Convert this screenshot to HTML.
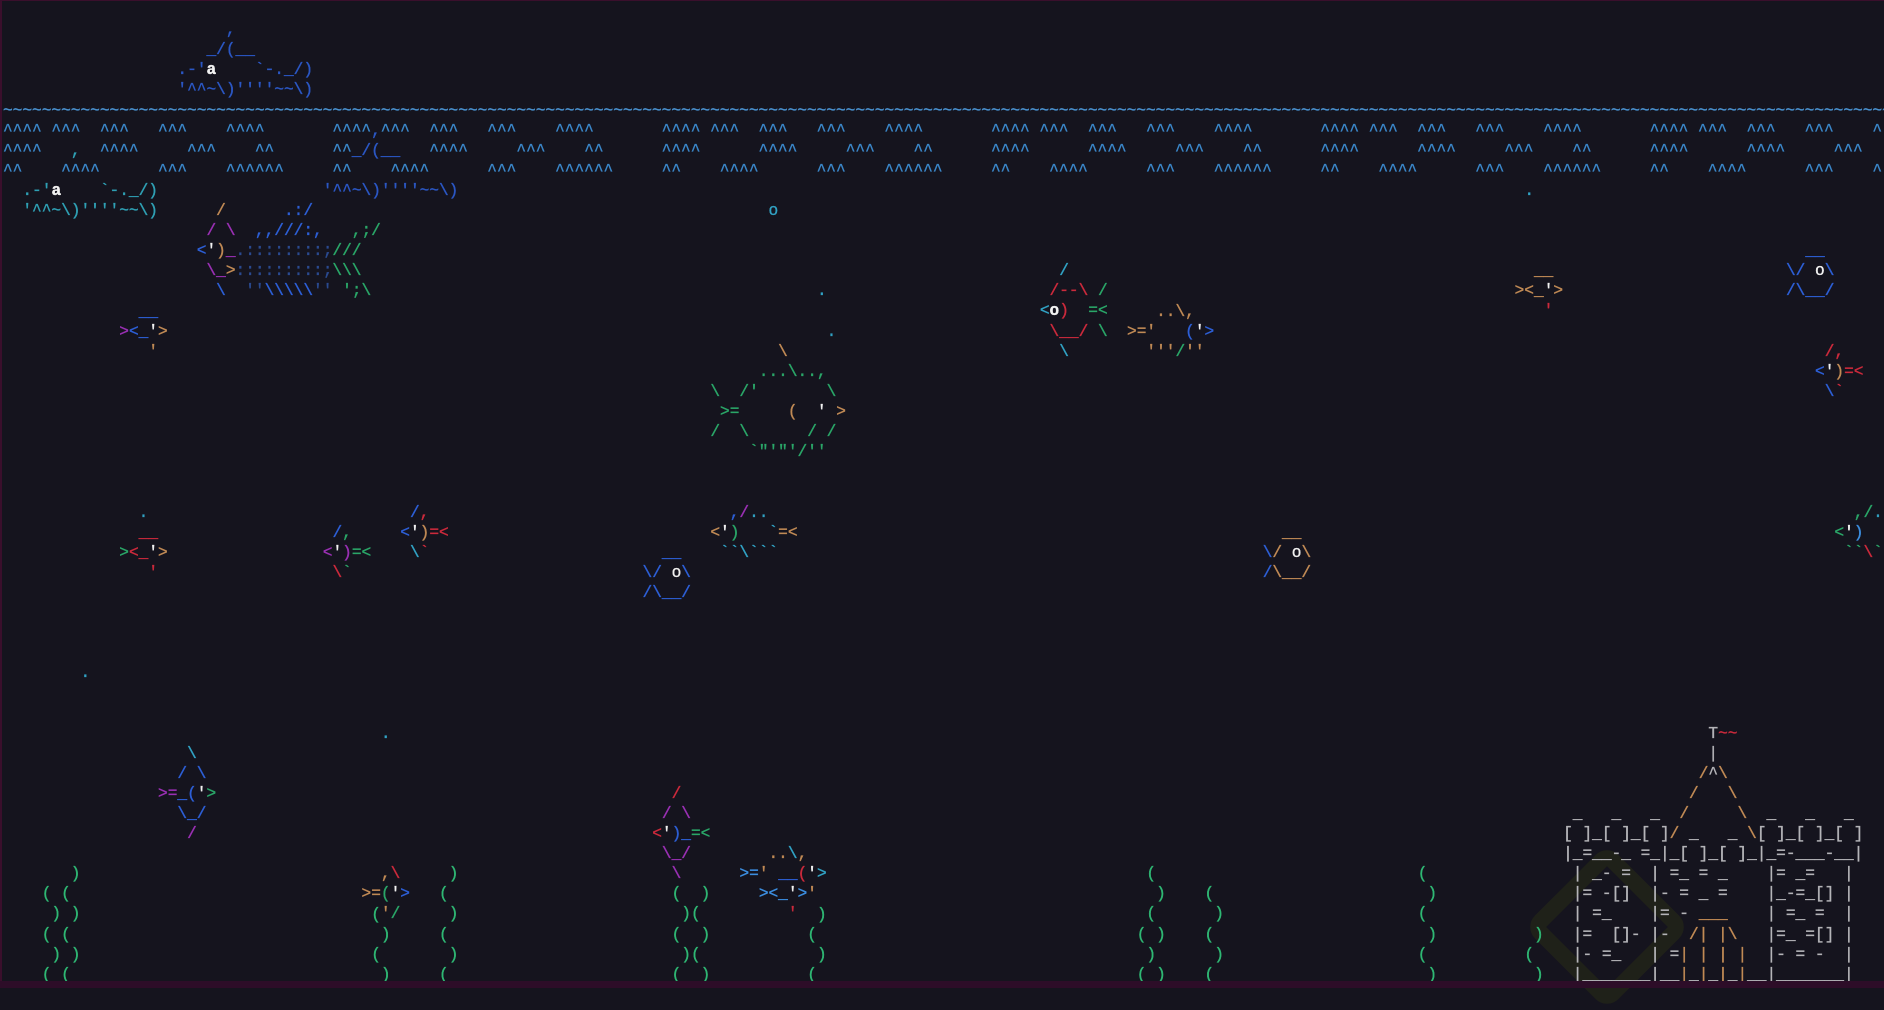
<!DOCTYPE html>
<html><head><meta charset="utf-8"><style>
html,body{margin:0;padding:0;background:#15141e;}
body{width:1884px;height:988px;overflow:hidden;background:#15141e;position:relative;font-family:"Liberation Mono",monospace;font-size:16.15px;line-height:20.16px;}
.s{position:absolute;white-space:pre;margin:0;left:calc(3px + var(--c) * 9.69px);top:calc(var(--r) * 20.1px);font:inherit;line-height:20.1px;-webkit-text-stroke:0.35px currentColor;}
.db{color:#2b57c4}.t{color:#2fa0b4}.wv{color:#3b87c9}.wt{color:#4a92d0}
.w{color:#f2f2f2}.p{color:#9a30b4}.o{color:#c08a55}.g{color:#2aa668}.r{color:#cc2a3c}
.c{color:#31a2c4}.b{color:#2d5fd6}.dim{color:#2a4a90}.gr{color:#b4b4b8}.sw{color:#2fb874}.lb{color:#3c8ee0}
.bd{font-weight:bold}
#lb{position:absolute;left:0;top:0;width:2px;height:988px;background:#3a0f2c}
#tb{position:absolute;left:0;top:0;width:1884px;height:1px;background:#3a0f2c}
#bb{position:absolute;left:0;top:981px;width:1884px;height:7px;background:#2d0d28}
#wm{position:absolute;left:1548px;top:868px;width:86px;height:86px;border:16px solid #1f2119;border-radius:16px;transform:rotate(45deg);}
</style></head><body>
<div id="wm"></div>
<div id="tb"></div><div id="lb"></div>

<pre class="s db" style="--c:18;--r:1">     ,
   _/(__
.-'<span class="w bd">a</span>    &#96;-._/)
'^^~\)''''~~\)</pre>

<pre class="s wt" style="--c:0;--r:5">~~~~~~~~~~~~~~~~~~~~~~~~~~~~~~~~~~~~~~~~~~~~~~~~~~~~~~~~~~~~~~~~~~~~~~~~~~~~~~~~~~~~~~~~~~~~~~~~~~~~~~~~~~~~~~~~~~~~~~~~~~~~~~~~~~~~~~~~~~~~~~~~~~~~~~~~~~~~~~~~~~~~~~~~~~~~~~~~~~~~~~~~~~~~~~~~~~~~~</pre>
<pre class="s wv" style="--c:0;--r:6">^^^^ ^^^  ^^^   ^^^    ^^^^       ^^^^<span class="db">,</span>^^^  ^^^   ^^^    ^^^^       ^^^^ ^^^  ^^^   ^^^    ^^^^       ^^^^ ^^^  ^^^   ^^^    ^^^^       ^^^^ ^^^  ^^^   ^^^    ^^^^       ^^^^ ^^^  ^^^   ^^^    ^</pre>
<pre class="s wv" style="--c:0;--r:7">^^^^   <span class="t">,</span>  ^^^^     ^^^    ^^      ^^<span class="db">_/(__</span>   ^^^^     ^^^    ^^      ^^^^      ^^^^     ^^^    ^^      ^^^^      ^^^^     ^^^    ^^      ^^^^      ^^^^     ^^^    ^^      ^^^^      ^^^^     ^^^  </pre>
<pre class="s wv" style="--c:0;--r:8">^^    ^^^^      ^^^    ^^^^^^     ^^    ^^^^      ^^^    ^^^^^^     ^^    ^^^^      ^^^    ^^^^^^     ^^    ^^^^      ^^^    ^^^^^^     ^^    ^^^^      ^^^    ^^^^^^     ^^    ^^^^      ^^^    ^</pre>

<pre class="s t" style="--c:2;--r:9">.-'<span class="w bd">a</span>    &#96;-._/)
'^^~\)''''~~\)</pre>
<pre class="s db" style="--c:33;--r:9">'^^~\)''''~~\)</pre>

<pre class="s" style="--c:20;--r:10"><span class="o">  /</span>      <span class="b">.:/</span>
<span class="p"> / \</span>  <span class="b">,,///:,</span>   <span class="g">,;/</span>
<span class="b">&lt;</span><span class="w">'</span><span class="o">)</span><span class="p">_</span><span class="dim">.::::::::;</span><span class="g">///</span>
<span class="p"> \_</span><span class="o">&gt;</span><span class="dim">:::::::::;</span><span class="g">\\\</span>
<span class="b">  \</span>  <span class="dim">''</span><span class="b">\\\\\</span><span class="dim">''</span> <span class="g">';\</span></pre>

<pre class="s" style="--c:12;--r:15"><span class="b">  __</span>
<span class="p">&gt;</span><span class="b">&lt;_</span><span class="w">'</span><span class="o">&gt;</span>
<span class="o">   '</span></pre>

<pre class="s c" style="--c:79;--r:10">o</pre>
<pre class="s c" style="--c:84;--r:14">.</pre>
<pre class="s c" style="--c:85;--r:16">.</pre>
<pre class="s c" style="--c:157;--r:9">.</pre>
<pre class="s c" style="--c:8;--r:33">.</pre>
<pre class="s c" style="--c:39;--r:36">.</pre>

<pre class="s g" style="--c:73;--r:17"><span class="o">       \</span>
     ...\..,
\  /'       \
 &gt;=     <span class="o">(</span>  <span class="w">'</span> <span class="o">&gt;</span>
/  \      / /
    &#96;"'"'/''</pre>

<pre class="s" style="--c:107;--r:13"><span class="c">  /</span>
<span class="r"> /--\</span> <span class="g">/</span>
<span class="c">&lt;</span><span class="w bd">o</span><span class="r">)</span>  <span class="g">=&lt;</span>
<span class="r"> \__/</span> <span class="g">\</span>
<span class="c">  \</span></pre>

<pre class="s o" style="--c:116;--r:15">   ..\,
&gt;='   <span class="b">(</span><span class="w">'</span><span class="b">&gt;</span>
  '''<span class="g">/</span>''</pre>

<pre class="s o" style="--c:156;--r:13">  __
&gt;&lt;_<span class="w">'</span>&gt;
<span class="r">   '</span></pre>

<pre class="s b" style="--c:184;--r:12">  __
\/ <span class="w">o</span>\
/\__/</pre>

<pre class="s" style="--c:187;--r:17"><span class="r"> /,</span>
<span class="b">&lt;</span><span class="w">'</span><span class="o">)</span><span class="r">=&lt;</span>
 <span class="b">\</span><span class="r">&#96;</span></pre>

<pre class="s" style="--c:12;--r:25"><span class="c">  .</span>
<span class="r">  __</span>
<span class="g">&gt;</span><span class="r">&lt;_</span><span class="w">'</span><span class="o">&gt;</span>
<span class="r">   '</span></pre>

<pre class="s" style="--c:33;--r:26"> <span class="b">/</span><span class="g">,</span>
<span class="p">&lt;</span><span class="w">'</span><span class="p">)</span><span class="g">=&lt;</span>
 <span class="r">\</span><span class="g">&#96;</span></pre>

<pre class="s" style="--c:41;--r:25"> <span class="b">/</span><span class="r">,</span>
<span class="b">&lt;</span><span class="w">'</span><span class="o">)</span><span class="r">=&lt;</span>
 <span class="c">\</span><span class="r">&#96;</span></pre>

<pre class="s" style="--c:73;--r:25">  <span class="b">,</span><span class="p">/</span><span class="c">..</span>
<span class="o">&lt;</span><span class="w">'</span><span class="g">)</span>   <span class="c">&#96;</span><span class="o">=&lt;</span>
<span class="c"> &#96;&#96;\&#96;&#96;&#96;</span></pre>

<pre class="s b" style="--c:66;--r:27">  __
\/ <span class="w">o</span>\
/\__/</pre>

<pre class="s o" style="--c:130;--r:26">  __
<span class="b">\</span>/ <span class="w">o</span>\
<span class="b">/</span>\__/</pre>

<pre class="s" style="--c:189;--r:25">  <span class="g">,/</span><span class="c">.</span>
<span class="g">&lt;</span><span class="w">'</span><span class="lb">)</span>
 <span class="g">&#96;&#96;</span><span class="r">\</span><span class="g">&#96;</span></pre>

<pre class="s" style="--c:16;--r:37"><span class="c">   \</span>
<span class="b">  / \</span>
<span class="p">&gt;=</span><span class="b">_(</span><span class="w">'</span><span class="g">&gt;</span>
<span class="b">  \_/</span>
<span class="p">   /</span></pre>

<pre class="s" style="--c:67;--r:39"><span class="r">  /</span>
<span class="p"> / \</span>
<span class="r">&lt;</span><span class="w">'</span><span class="b">)_</span><span class="g">=&lt;</span>
<span class="p"> \_/</span>
<span class="p">  \</span></pre>

<pre class="s" style="--c:76;--r:42"><span class="o">   ..</span><span class="c">\</span><span class="o">,</span>
<span class="lb">&gt;=</span><span class="o">'</span> <span class="b">__</span><span class="r">(</span><span class="w">'</span><span class="c">&gt;</span>
  <span class="lb">&gt;&lt;_</span><span class="w">'</span><span class="lb">&gt;</span><span class="o">'</span>
<span class="r">     '</span></pre>

<pre class="s" style="--c:37;--r:43"><span class="o">  ,</span><span class="r">\</span>
<span class="o">&gt;=</span><span class="g">(</span><span class="w">'</span><span class="b">&gt;</span>
  <span class="o">'</span><span class="g">/</span></pre>

<pre class="s sw" style="--c:4;--r:43">   )
( (
 ) )
( (
 ) )
( (</pre>
<pre class="s sw" style="--c:45;--r:43"> )
(
 )
(
 )
(</pre>
<pre class="s sw" style="--c:38;--r:45">(
 )
(
 )</pre>
<pre class="s sw" style="--c:69;--r:44">(  )
 )(
(  )
 )(
(  )</pre>
<pre class="s sw" style="--c:83;--r:45"> )
(
 )
(</pre>
<pre class="s sw" style="--c:117;--r:43"> (
  )
 (
( )
 )
( )</pre>
<pre class="s sw" style="--c:124;--r:44">(
 )
(
 )
(</pre>
<pre class="s sw" style="--c:146;--r:43">(
 )
(
 )
(
 )</pre>
<pre class="s sw" style="--c:157;--r:46"> )
(
 )</pre>

<pre class="s gr" style="--c:161;--r:36">               T<span class="r">~~</span>
               |
              <span class="o">/</span>^<span class="o">\</span>
             <span class="o">/</span>   <span class="o">\</span>
 _   _   _  <span class="o">/</span>     <span class="o">\</span>  _   _   _
[ ]_[ ]_[ ]<span class="o">/</span> _   _ <span class="o">\</span>[ ]_[ ]_[ ]
|_=__-_ =_|_[ ]_[ ]_|_=-___-__|
 | _- =  | =_ = _    |= _=   |
 |= -[]  |- = _ =    |_-=_[] |
 | =_    |= - <span class="o">___</span>    | =_ =  |
 |=  []- |-  <span class="o">/| |\</span>   |=_ =[] |
 |- =_   | =<span class="o">|</span> <span class="o">|</span> <span class="o">|</span> <span class="o">|</span>  |- = -  |
 |_______|__<span class="o">|</span>_<span class="o">|</span>_<span class="o">|</span>_<span class="o">|</span>__|_______|</pre>

<div id="bb"></div>
</body></html>
